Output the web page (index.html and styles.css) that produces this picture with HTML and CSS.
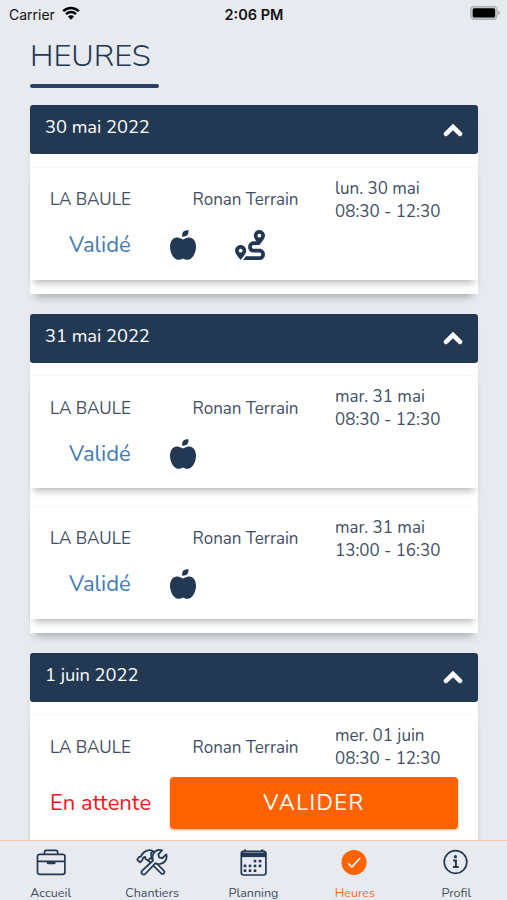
FILE: index.html
```
<!DOCTYPE html>
<html lang="fr">
<head>
    <meta charset="UTF-8">
    <meta name="viewport" content="width=device-width, initial-scale=1.0">
    <title>Heures</title>
    <link rel="stylesheet" href="styles.css">
</head>
<body>
    <!-- Shared icons -->
    <svg class="sprite" width="0" height="0">
        <symbol id="apple" viewBox="0 0 448 512">
            <path d="M350.85 129c25.97 4.67 47.27 18.67 63.92 42 14.65 20.67 24.64 46.67 29.96 78 4.67 28.67 4.32 57.33-1 86-7.99 47.33-23.97 87-47.94 119-28.64 38.67-64.59 58-107.87 58-10.66 0-22.3-3.33-34.96-10-8.66-5.33-18.31-8-28.97-8s-20.3 2.67-28.97 8c-12.66 6.67-24.3 10-34.96 10-43.28 0-79.23-19.33-107.87-58-23.97-32-39.95-71.67-47.94-119-5.32-28.67-5.67-57.33-1-86 5.32-31.33 15.31-57.33 29.96-78 16.65-23.33 37.95-37.33 63.92-42 15.98-2.67 37.95-.33 65.92 7 23.97 6.67 44.28 14.67 60.93 24 16.65-9.33 36.96-17.33 60.93-24 27.98-7.33 49.96-9.67 65.94-7zm-54.94-41c-9.32 8.67-21.65 15-36.96 19-10.66 3.33-22.3 5-34.96 5l-14.98-1c-1.33-9.33-1.33-20 0-32 2.67-24 10.32-42.33 22.97-55 9.32-8.67 21.65-15 36.96-19 10.66-3.33 22.3-5 34.96-5l14.98 1 1 15c0 12.67-1.67 24.33-4.99 35-3.99 15.33-10.31 27.67-18.98 37z"/>
        </symbol>
        <symbol id="route" viewBox="0 0 512 512">
            <path d="M416 320h-96c-17.6 0-32-14.4-32-32s14.4-32 32-32h96s96-107 96-160-43-96-96-96-96 43-96 96c0 25.5 22.2 63.4 45.3 96H320c-52.9 0-96 43.1-96 96s43.1 96 96 96h96c17.6 0 32 14.4 32 32s-14.4 32-32 32H185.5c-16 24.8-33.8 47.7-47.3 64H416c52.9 0 96-43.1 96-96s-43.1-96-96-96zm0-256c17.7 0 32 14.3 32 32s-14.3 32-32 32-32-14.3-32-32 14.3-32 32-32zM96 256c-53 0-96 43-96 96s96 160 96 160 96-107 96-160-43-96-96-96zm0 128c-17.7 0-32-14.3-32-32s14.3-32 32-32 32 14.3 32 32-14.3 32-32 32z"/>
        </symbol>
        <symbol id="chevron" viewBox="0 0 20 14">
            <path d="M3 10.8L10 4L17 10.8" fill="none" stroke="#fff" stroke-width="4.6" stroke-linecap="round"/>
        </symbol>
    </svg>

    <div class="status-bar">
        <div class="carrier">
            <span>Carrier</span>
            <svg width="18" height="14" viewBox="0 0 18 14">
                <path d="M1.2 5.1a11.2 11.2 0 0 1 15.6 0M4 8.1a7.2 7.2 0 0 1 10 0" fill="none" stroke="#000" stroke-width="2.5"/>
                <path d="M9 13.7L5.9 10.5a4.4 4.4 0 0 1 6.2 0z"/>
            </svg>
        </div>
        <div class="clock">2:06 PM</div>
        <div class="battery">
            <svg width="31" height="15" viewBox="0 0 31 15">
                <rect x="0.7" y="0.5" width="26.4" height="12.8" rx="3.6" fill="#c4c6c8" stroke="#adafb2" stroke-width="1.2"/>
                <rect x="2.7" y="2.2" width="22.4" height="9.4" rx="1.6"/>
                <path d="M28.3 4.8c2 .5 2 3.8 0 4.4z" fill="#a3a5a8"/>
            </svg>
        </div>
    </div>

    <main class="content">
        <h1 class="title">HEURES</h1>
        <div class="underline"></div>

        <section class="day">
            <div class="day-header"><span>30 mai 2022</span><svg class="chevron"><use href="#chevron"/></svg></div>
            <div class="card">
                <div class="info">
                    <span>LA BAULE</span>
                    <span>Ronan Terrain</span>
                    <span>lun. 30 mai<br>08:30 - 12:30</span>
                </div>
                <div class="state">
                    <span class="valid">Validé</span>
                    <svg class="apple"><use href="#apple"/></svg>
                    <svg class="route"><use href="#route"/></svg>
                </div>
            </div>
        </section>

        <section class="day">
            <div class="day-header"><span>31 mai 2022</span><svg class="chevron"><use href="#chevron"/></svg></div>
            <div class="card">
                <div class="info">
                    <span>LA BAULE</span>
                    <span>Ronan Terrain</span>
                    <span>mar. 31 mai<br>08:30 - 12:30</span>
                </div>
                <div class="state">
                    <span class="valid">Validé</span>
                    <svg class="apple"><use href="#apple"/></svg>
                </div>
            </div>
            <div class="card">
                <div class="info">
                    <span>LA BAULE</span>
                    <span>Ronan Terrain</span>
                    <span>mar. 31 mai<br>13:00 - 16:30</span>
                </div>
                <div class="state">
                    <span class="valid">Validé</span>
                    <svg class="apple"><use href="#apple"/></svg>
                </div>
            </div>
        </section>

        <section class="day">
            <div class="day-header"><span>1 juin 2022</span><svg class="chevron"><use href="#chevron"/></svg></div>
            <div class="card">
                <div class="info">
                    <span>LA BAULE</span>
                    <span>Ronan Terrain</span>
                    <span>mer. 01 juin<br>08:30 - 12:30</span>
                </div>
                <div class="state to-validate">
                    <span class="pending">En attente</span>
                    <button class="validate">VALIDER</button>
                </div>
            </div>
        </section>
    </main>

    <nav class="tabs">
        <a class="tab">
            <svg width="30" height="30" viewBox="0 0 30 30" fill="none" stroke="#233953" stroke-width="1.7" stroke-linejoin="round">
                <rect x="1.5" y="6.4" width="27.4" height="20" rx="2.2"/>
                <path d="M8.5 6.2V4.4a2 2 0 0 1 2-2h9.2a2 2 0 0 1 2 2v1.8M1.5 13.4h27.4"/>
                <path d="M10.8 13.7h8.8v1.2a1.3 1.3 0 0 1-1.3 1.3h-6.2a1.3 1.3 0 0 1-1.3-1.3z" fill="#233953" stroke="none"/>
            </svg>
            <span>Accueil</span>
        </a>
        <a class="tab">
            <svg width="32" height="30" viewBox="0 0 32 30" fill="none" stroke-linejoin="round" stroke-linecap="round">
                <!-- hammer handle -->
                <path d="M13 10.5L26.5 24" stroke="#233953" stroke-width="5.4"/>
                <path d="M13 10.5L26.5 24" stroke="#e7eaef" stroke-width="2.2"/>
                <!-- hammer head -->
                <path d="M1.3 11.8l1.8-2.9 1.6-.2C6.1 5 10 2 13.6 2.2c1.6.1 3 .6 4 1.3-2.2.4-3.1 1.7-2.5 3.3l.8 1.8-4 4-2.4-1.8-.5-2-1.9 1-.8 2.3-2.4 2.2z" stroke="#233953" stroke-width="1.8" fill="#e7eaef"/>
                <!-- wrench -->
                <path d="M17 12.5L6 22.8a1.9 1.9 0 0 0 0 2.8l.4.4a1.9 1.9 0 0 0 2.8 0L19.5 15.2c3.6 1.6 7.6.6 9.8-2.3 1.3-1.9 1.7-4.2 1-6.4l-4.2 3.7-3-.8-.8-3.1 3.7-3.9c-3.3-1-6.7.2-8.4 3-1.3 2.1-1.5 4.6-.6 7.1z" stroke="#233953" stroke-width="1.8" fill="#e7eaef"/>
            </svg>
            <span>Chantiers</span>
        </a>
        <a class="tab">
            <svg width="30" height="30" viewBox="0 0 30 30">
                <rect x="3.3" y="3.4" width="24.6" height="23.6" rx="2.2" fill="none" stroke="#233953" stroke-width="1.7"/>
                <path d="M3 4.2h25.2v4.9H3z" fill="#233953"/>
                <path d="M5.8 2.4h2.4M23 2.4h2.4" stroke="#233953" stroke-width="1.6"/>
                <path d="M5.6 4.5h20" stroke="#7e8b9b" stroke-width="1"/>
                <g fill="#233953">
                    <rect x="15.7" y="11.8" width="2.6" height="2.6"/><rect x="20.7" y="11.8" width="2.6" height="2.6"/>
                    <rect x="5.7" y="16.6" width="2.6" height="2.6"/><rect x="10.7" y="16.6" width="2.6" height="2.6"/><rect x="15.7" y="16.6" width="2.6" height="2.6"/><rect x="20.7" y="16.6" width="2.6" height="2.6"/>
                    <rect x="5.7" y="21.4" width="2.6" height="2.6"/><rect x="10.7" y="21.4" width="2.6" height="2.6"/><rect x="15.7" y="21.4" width="2.6" height="2.6"/>
                </g>
            </svg>
            <span>Planning</span>
        </a>
        <a class="tab active">
            <svg width="30" height="30" viewBox="0 0 30 30">
                <circle cx="14" cy="14.4" r="12.5" fill="#ff6200"/>
                <path d="M8.2 15.2l3.7 3.8L20.1 10" fill="none" stroke="#fff" stroke-width="1.6"/>
            </svg>
            <span>Heures</span>
        </a>
        <a class="tab">
            <svg width="30" height="30" viewBox="0 0 30 30" fill="none" stroke="#233953">
                <circle cx="14.5" cy="14" r="11.3" stroke-width="1.7"/>
                <path d="M12.1 12.4h2.8v6.5M11.9 19.1h5.8" stroke-width="2"/>
                <circle cx="14.4" cy="8.7" r="1.6" fill="#233953" stroke="none"/>
            </svg>
            <span>Profil</span>
        </a>
    </nav>
</body>
</html>
```
FILE: styles.css
```
* {
    box-sizing: border-box;
}
body {
    margin: 0;
    height: 900px;
    overflow: hidden;
    display: flex;
    flex-direction: column;
    background-color: #e7eaef;
    color: #414e63;
    font-family: Nunito, Lato, sans-serif;
    font-size: 17px;
}
svg {
    display: block;
    flex-shrink: 0;
}
.sprite {
    position: absolute;
}
.status-bar {
    flex: none;
    display: grid;
    grid-template-columns: 1fr auto 1fr;
    align-items: center;
    height: 28px;
    padding: 0 6px 0 9px;
    font-family: Inter, sans-serif;
    font-size: 14px;
    color: #111;
}
.carrier {
    display: flex;
    align-items: center;
    gap: 7px;
}
.carrier svg {
    margin-top: -2px;
}
.clock {
    font-size: 14.5px;
    font-weight: 600;
    margin-right: 2px;
}
.battery {
    justify-self: end;
    margin-top: -1px;
}
.content {
    flex: 1;
    min-height: 0;
    overflow: hidden;
    padding: 8px 29.5px 0 30px;
}
.title {
    height: 48px;
    margin: 0;
    color: #233953;
    font-size: 31px;
    font-weight: 300;
    line-height: 40px;
}
.underline {
    width: 128.5px;
    height: 4px;
    margin-bottom: 17px;
    border-radius: 2px;
    background-color: #27405f;
}
.day {
    margin-bottom: 19.5px;
    padding-bottom: 14.5px;
    background-color: #fff;
    border-radius: 3px 3px 0 0;
    box-shadow: 0 8px 8px -5px rgba(0, 0, 0, 0.28);
}
.day-header {
    display: flex;
    justify-content: space-between;
    height: 49px;
    padding: 0 15px;
    margin-bottom: 13.5px;
    border-radius: 3px;
    background-color: #233953;
    color: #fff;
    font-size: 18.3px;
    line-height: 45px;
}
.chevron {
    width: 20px;
    height: 14px;
    margin-top: 17.5px;
}
.card {
    padding: 9px 19px 12px 20px;
    background-color: #fff;
    box-shadow: 0 7px 7px -4px rgba(0, 0, 0, 0.28), 0 -1px 2px -1px rgba(0, 0, 0, 0.08);
}
.card + .card {
    margin-top: 18.5px;
}
.info {
    display: grid;
    grid-template-columns: 142.5px 142.5px 1fr;
    align-items: center;
    line-height: 23px;
    white-space: nowrap;
}
.state {
    display: flex;
    align-items: center;
    height: 45px;
    font-size: 22px;
    line-height: 28px;
    white-space: nowrap;
}
.valid {
    width: 101px;
    padding-left: 19px;
    color: #407bb5;
}
.apple {
    width: 26px;
    height: 30px;
    margin-left: 19px;
    fill: #233953;
}
.route {
    width: 30px;
    height: 30px;
    margin-left: 39px;
    fill: #233953;
}
.to-validate {
    height: 66px;
}
.pending {
    width: 120px;
    color: #f01818;
}
.validate {
    width: 288px;
    height: 52px;
    flex: none;
    padding: 0;
    border: none;
    border-radius: 4px;
    background-color: #ff6200;
    box-shadow: 0 1px 2px rgba(255, 98, 0, 0.5);
    color: #fff;
    font-family: inherit;
    font-size: 22px;
    letter-spacing: 1.4px;
}
.tabs {
    flex: none;
    display: grid;
    grid-template-columns: repeat(5, 1fr);
    height: 60px;
    border-top: 1px solid #f5c6ac;
}
.tab {
    display: flex;
    flex-direction: column;
    align-items: center;
    padding-top: 7px;
    font-size: 12.5px;
    line-height: 29px;
}
.active {
    color: #fb6c1c;
}
```
